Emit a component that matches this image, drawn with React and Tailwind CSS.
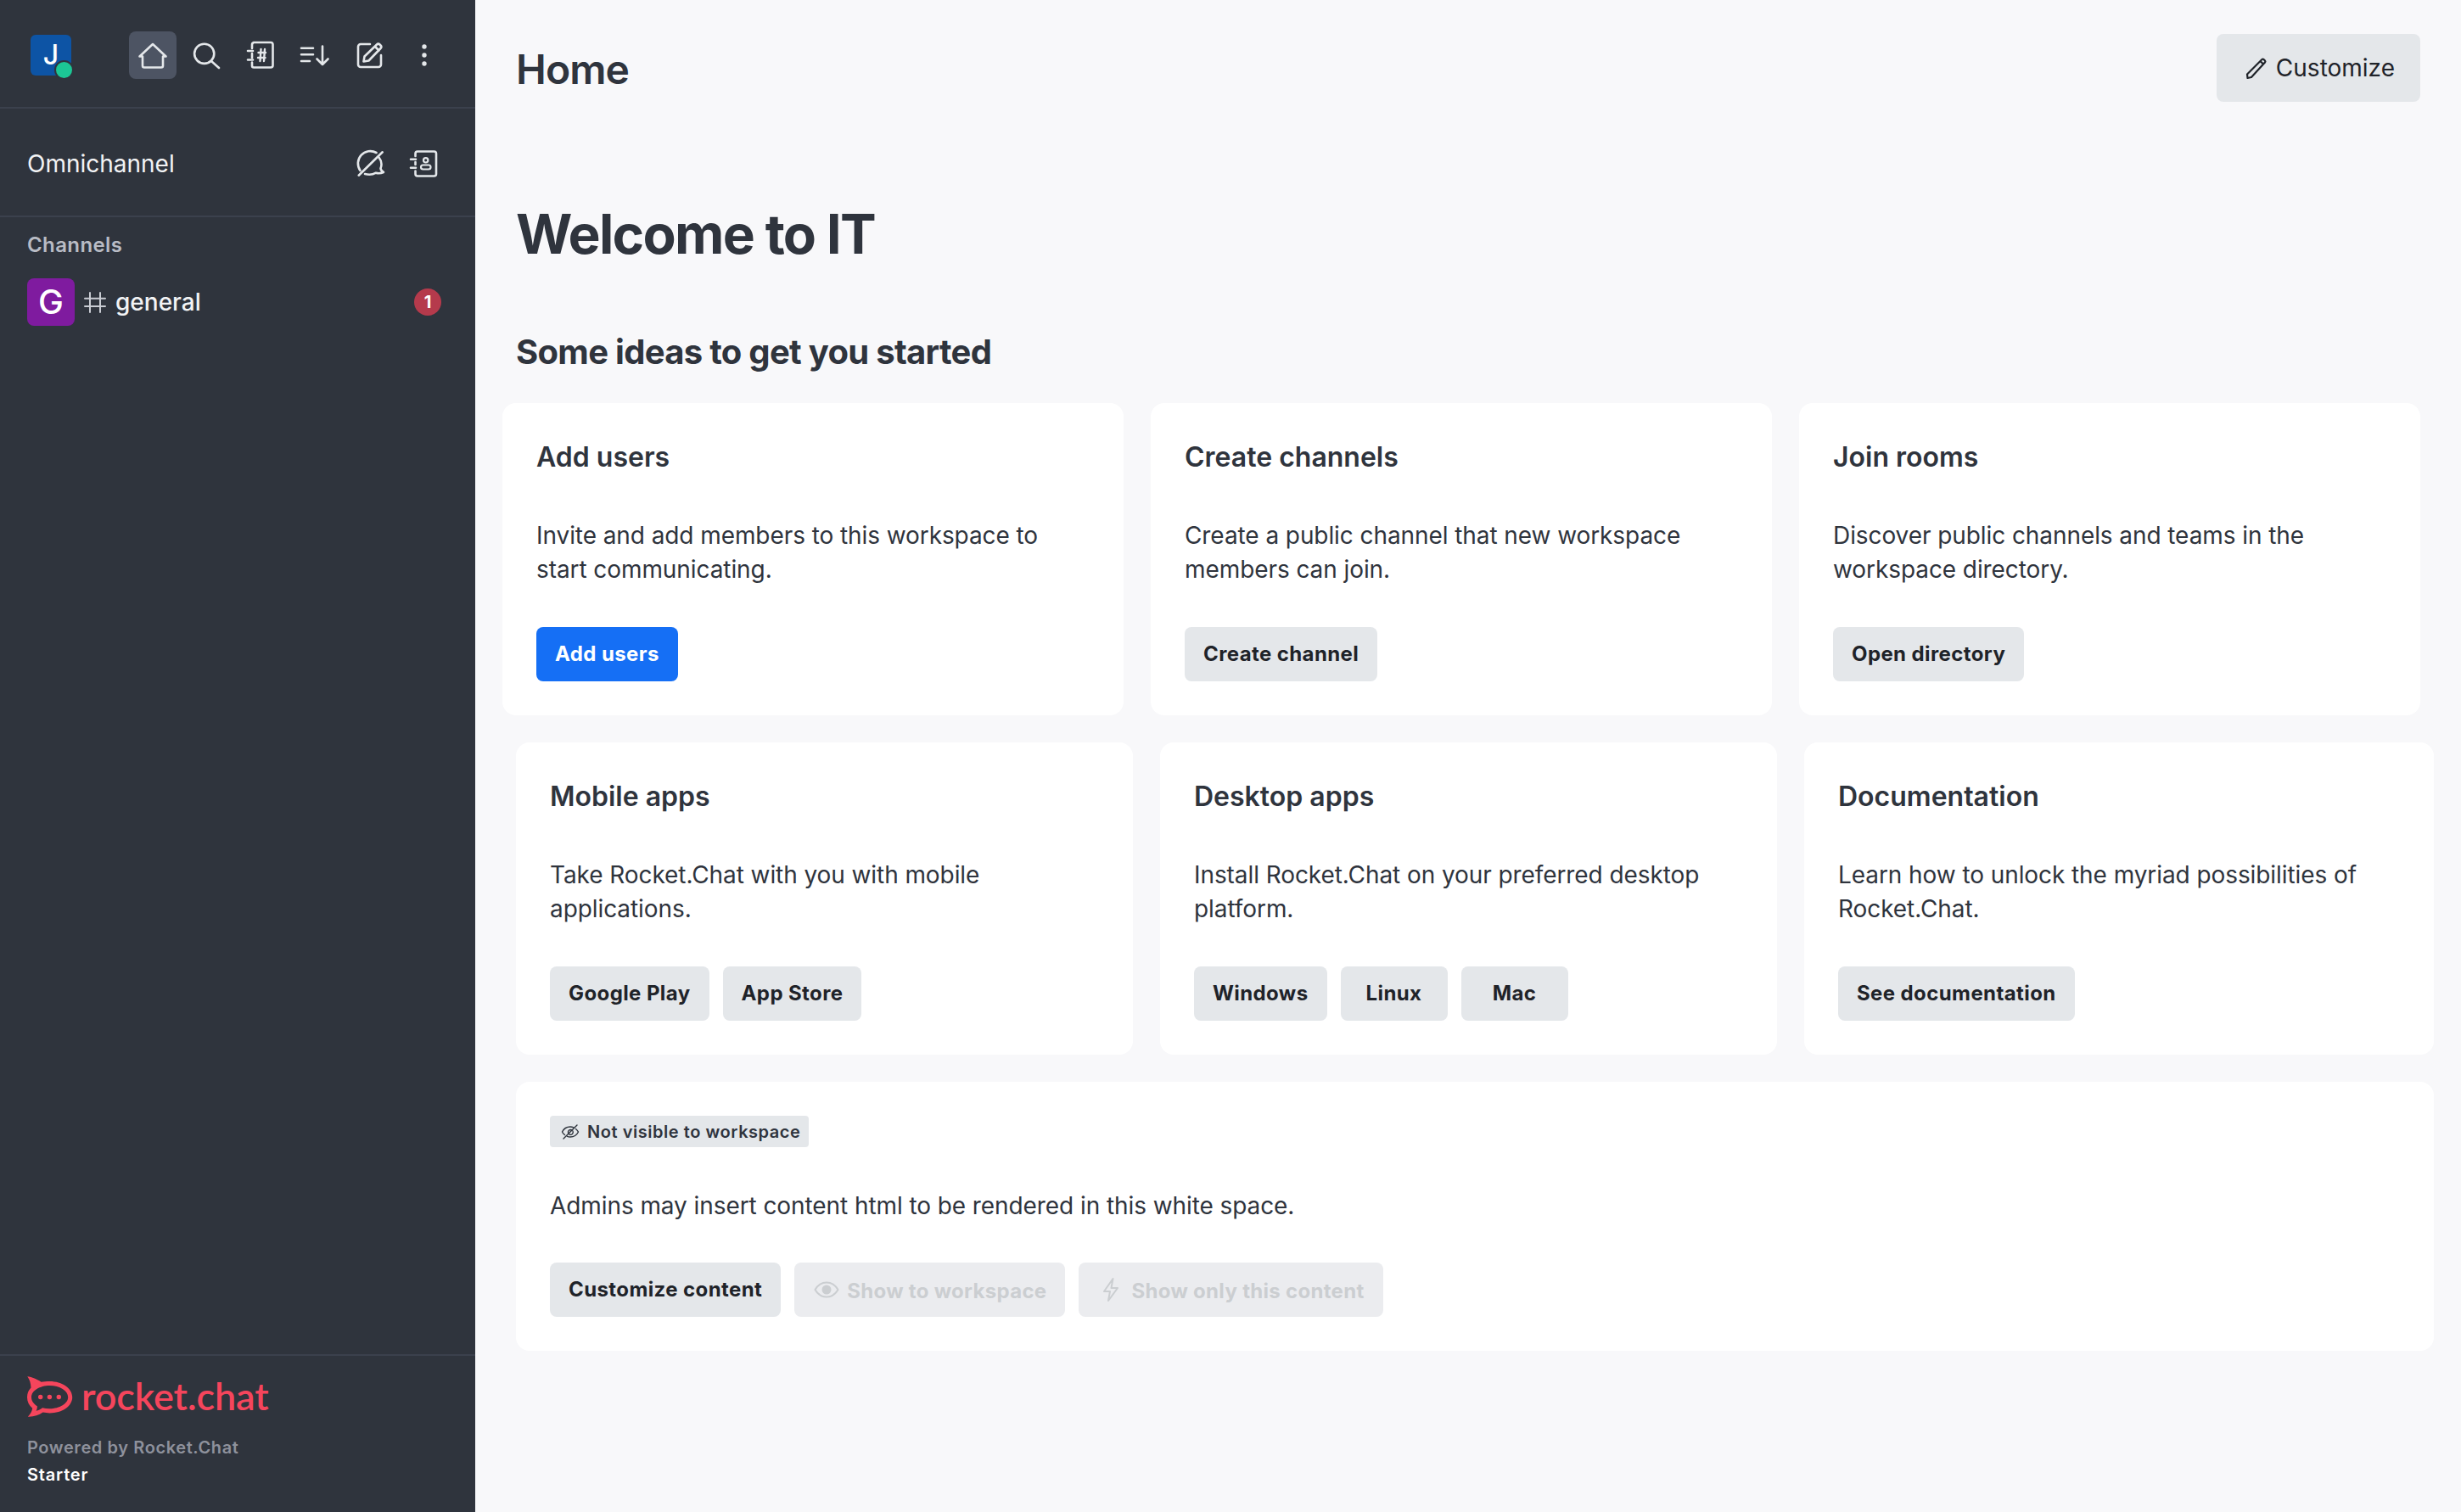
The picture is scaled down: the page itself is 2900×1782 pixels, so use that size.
const Ico = ({ children, className = "w-10 h-10", sw = 2.6 }) => (
  <svg viewBox="0 0 40 40" fill="none" stroke="currentColor" strokeWidth={sw} strokeLinecap="round" strokeLinejoin="round" className={className}>
    {children}
  </svg>
);

const Home = () => (
  <Ico><path d="M4.5 21.5 20 7l15.5 14.5H32v11a2 2 0 0 1-2 2H10a2 2 0 0 1-2-2v-11H4.5Z" /></Ico>
);
const Search = () => (
  <Ico><circle cx="16.7" cy="18.3" r="11.6" /><path d="M25 27l9 8" /></Ico>
);
const Directory = () => (
  <Ico>
    <path d="M9 12V8a3 3 0 0 1 2-3h20a2.5 2.5 0 0 1 2.5 2.5v24.500a2.500 2.500 0 0 1-2.500 2.500H11a2 2 0 0 1-2-2v-4M9 18v5" />
    <path d="M4 15h6M4 25.500h6" />
    <path d="M16.500 17h8.500M16 23h8.500M19.500 13l-1 14M24 13l-1 14" strokeWidth="2.4" />
  </Ico>
);
const Sort = () => (
  <Ico>
    <path d="M3 11.700h14M3 19.300h14M3 27h10M28 9.500V31M21.500 24.500 28 31l6.500-6.500" />
  </Ico>
);
const Edit = () => (
  <Ico>
    <path d="M20 7H9a3 3 0 0 0-3 3v21a3 3 0 0 0 3 3h21a3 3 0 0 0 3-3V20" />
    <path d="M12.500 27.500l1-6L28 7.500a2.500 2.500 0 0 1 3.500 0l1 1a2.500 2.500 0 0 1 0 3.500L18.500 26.500l-6 1ZM26 10l4.500 4.500" />
  </Ico>
);
const Kebab = () => (
  <svg viewBox="0 0 40 40" fill="currentColor" className="w-10 h-10">
    <circle cx="20" cy="10" r="2.700" /><circle cx="20" cy="20" r="2.700" /><circle cx="20" cy="30" r="2.700" />
  </svg>
);
const OmniOff = () => (
  <Ico>
    <path d="M27.500 7A14.500 14.500 0 0 0 8.500 28" />
    <path d="M30.500 12.500C32.500 15 33.500 17.500 33.500 20.500c0 2-.4 3.600-1 5 .3 1.800 1.500 3.500 3.500 4.500-3 1.300-6.500 1.500-9 .7-4 2.300-8.500 2.500-13 1.300" />
    <path d="M34.700 6.300 6.700 33.700" />
  </Ico>
);
const Contact = () => (
  <Ico>
    <path d="M9.500 11V8a2.500 2.500 0 0 1 2.500-2.500h19.500A2.500 2.500 0 0 1 34 8v24a2.500 2.500 0 0 1-2.500 2.500H12A2.500 2.500 0 0 1 9.500 32v-3.500M9.500 18v3" />
    <path d="M4 14.700h6M4 24.700h6" />
    <circle cx="21.700" cy="15.800" r="2.700" strokeWidth="2.200" />
    <rect x="16" y="21.500" width="11.500" height="5" rx="2.500" strokeWidth="2.200" />
  </Ico>
);
const HashIc = () => (
  <Ico sw={2} className="w-10 h-10 shrink-0 ml-[4px] text-[#c9ccd3]">
    <path d="M14 9v23M26 9v23M8 15.700h24M8 25h24" />
  </Ico>
);

const Logo = () => (
  <div className="flex items-center h-12">
    <svg viewBox="0 0 54 48" className="w-[54px] h-12 shrink-0">
      <path fill="#f5455c" fillRule="evenodd" d="M.3.300C5.500.800 12 3.500 16.500 6.800 19.500 6.300 23 6 26.500 6 41.500 6 53.200 14.300 53.200 24.700c0 10.400-11.700 18.700-26.700 18.700-2.500 0-5.500-.3-8-.8C13.500 46.200 7.500 48 .8 47.700 4 44.500 5.800 41.300 6.200 37.800 2.200 34.300 0 29.800 0 24.700c0-4.500 1.500-8 4.500-11.200C4.300 8.500 3 4 .3.300ZM26.500 11C15 11 5 17 5 24.700c0 4.200 2.500 7.800 6.800 10.500.2 1.800-.2 3.700-1.300 5.600 2.800-.5 5.300-1.800 7.500-3.600 2.600.6 5.500 1 8.500 1 11.800 0 21.700-6.300 21.700-13.500C48.200 17 38.300 11 26.500 11Z" />
      <circle cx="15.700" cy="24.500" r="2.700" fill="#f5455c" />
      <circle cx="26.400" cy="24.500" r="2.700" fill="#f5455c" />
      <circle cx="37.300" cy="24.500" r="2.700" fill="#f5455c" />
    </svg>
    <span className="ml-[10px] -mt-[2px] font-['Lato',sans-serif] font-semibold text-[45px] leading-[48px] tracking-[-0.1px] text-[#f5455c]">rocket.chat</span>
  </div>
);

const Btn = ({ children, primary }) => (
  <button className={`flex items-center justify-center min-w-[126px] h-16 px-[22px] rounded-lg text-[24px] leading-10 font-bold tracking-[0.4px] ${primary ? "bg-[#156ff5] text-white" : "bg-[#e4e7ea] text-[#1f2329]"}`}>
    {children}
  </button>
);
const DisabledBtn = ({ icon, children }) => (
  <button className="flex items-center h-16 px-[22px] gap-2 rounded-lg text-[24px] leading-10 font-bold tracking-[0.3px] bg-[#ebecef] text-[#cbced1]">
    {icon}
    <span className="mt-[3px]">{children}</span>
  </button>
);

const Card = ({ title, text, buttons, primary }) => (
  <div className="bg-white rounded-2xl p-10">
    <h3 className="text-[32px] leading-12 font-semibold text-[#2f343d]">{title}</h3>
    <p className="mt-12 h-20 text-[28px] leading-10 tracking-[-0.08px] text-[#2f343d]">{text}</p>
    <div className="mt-12 flex gap-4">
      {buttons.map((b) => (
        <Btn key={b} primary={primary}>{b}</Btn>
      ))}
    </div>
  </div>
);

export default function App() {
  return (
    <div className="flex w-[2900px] h-[1782px] overflow-hidden font-['Inter',sans-serif] bg-[#f8f8fa]">
      <aside className="flex flex-col w-[560px] shrink-0 bg-[#2f343d] text-[#e4e7ea]">
        <div className="flex items-center justify-between h-32 shrink-0 pt-1 pl-9 pr-8 border-b-2 border-[#3b414d]">
          <div className="relative w-12 h-12 rounded-md bg-[#0d54a5] flex items-center justify-center text-white text-[32px] font-medium">
            J
            <span className="absolute -right-[3px] -bottom-[5px] w-[23px] h-[23px] rounded-full bg-[#1cc795] border-2 border-[#2f343d]" />
          </div>
          <nav className="flex gap-2">
            <button className="w-14 h-14 flex items-center justify-center rounded-lg bg-[#4d5463]"><Home /></button>
            <button className="w-14 h-14 flex items-center justify-center rounded-lg"><Search /></button>
            <button className="w-14 h-14 flex items-center justify-center rounded-lg"><Directory /></button>
            <button className="w-14 h-14 flex items-center justify-center rounded-lg"><Sort /></button>
            <button className="w-14 h-14 flex items-center justify-center rounded-lg"><Edit /></button>
            <button className="w-14 h-14 flex items-center justify-center rounded-lg"><Kebab /></button>
          </nav>
        </div>
        <div className="flex items-center justify-between h-32 shrink-0 pt-1 pl-8 pr-8 border-b-2 border-[#3b414d]">
          <span className="text-[28px] leading-10 text-[#f2f3f5]">Omnichannel</span>
          <div className="flex gap-2">
            <button className="w-14 h-14 flex items-center justify-center"><OmniOff /></button>
            <button className="w-14 h-14 flex items-center justify-center"><Contact /></button>
          </div>
        </div>
        <div className="pt-[17px]">
          <div className="pl-8 text-[24px] leading-8 font-semibold tracking-[0.4px] text-[#b9bcc5]">Channels</div>
          <div className="mt-[23px] flex items-center h-14 pl-8 pr-10">
            <div className="w-14 h-14 rounded-lg bg-[#7f1b9f] flex items-center justify-center text-white text-[40px] font-medium">G</div>
            <HashIc />
            <span className="ml-[4px] text-[28px] leading-10 font-medium text-[#f2f3f5]">general</span>
            <span className="ml-auto w-8 h-8 rounded-full bg-[#b53a4c] flex items-center justify-center text-white text-[20px] leading-6 font-bold">1</span>
          </div>
        </div>
        <div className="mt-auto h-[186px] shrink-0 border-t-2 border-[#3b414d] pt-6 pl-8">
          <Logo />
          <div className="mt-5 text-[20px] leading-8 font-semibold tracking-[0.6px] text-[#8e919c]">Powered by Rocket.Chat</div>
          <div className="text-[20px] leading-8 font-semibold tracking-[0.8px] text-white">Starter</div>
        </div>
      </aside>

      <main className="flex-1 flex flex-col min-w-0">
        <header className="flex items-center justify-between h-40 shrink-0 pl-12 pr-12">
          <h1 className="mt-[3px] text-[48px] leading-16 font-semibold tracking-[-0.9px] text-[#2f343d]">Home</h1>
          <button className="flex items-center gap-2 h-20 pl-[30px] pr-[30px] rounded-lg bg-[#e4e7ea] text-[28px] leading-10 text-[#1f2329]">
            <svg viewBox="0 0 32 32" fill="none" stroke="currentColor" strokeWidth="2.200" strokeLinejoin="round" className="w-8 h-8">
              <path d="M6.500 28l-.5-4.500L22 7.500l1.500-1.500a1.500 1.500 0 0 1 2 0l1.500 1.500a1.500 1.500 0 0 1 0 2L11 27l-4.500 1ZM21.500 8l3.500 3.500" />
            </svg>
            Customize
          </button>
        </header>
        <div className="flex flex-col pl-12 pr-8">
          <h2 className="mt-[76px] text-[64px] leading-20 font-bold tracking-[-1.7px] text-[#2f343d]">Welcome to IT</h2>
          <h3 className="mt-[71px] text-[40px] leading-14 font-bold tracking-[-0.7px] text-[#2f343d]">Some ideas to get you started</h3>
          <div className="mt-[32px] -ml-4 mr-4 grid grid-cols-3 gap-8">
            <Card title="Add users" primary text="Invite and add members to this workspace to start communicating." buttons={["Add users"]} />
            <Card title="Create channels" text="Create a public channel that new workspace members can join." buttons={["Create channel"]} />
            <Card title="Join rooms" text="Discover public channels and teams in the workspace directory." buttons={["Open directory"]} />
          </div>
          <div className="mt-8 grid grid-cols-[727px_727px_1fr] gap-8">
            <Card title="Mobile apps" text="Take Rocket.Chat with you with mobile applications." buttons={["Google Play", "App Store"]} />
            <Card title="Desktop apps" text="Install Rocket.Chat on your preferred desktop platform." buttons={["Windows", "Linux", "Mac"]} />
            <Card title="Documentation" text="Learn how to unlock the myriad possibilities of Rocket.Chat." buttons={["See documentation"]} />
          </div>
          <div className="mt-8 bg-white rounded-2xl p-10">
            <div className="inline-flex items-center h-[37px] pl-3 pr-[10px] gap-2 rounded bg-[#e4e7ea] text-[20px] leading-6 font-semibold tracking-[0.55px] text-[#2f343d]">
              <svg viewBox="0 0 24 24" fill="none" stroke="currentColor" strokeWidth="1.400" strokeLinecap="round" strokeLinejoin="round" className="w-6 h-6">
                <path d="M5.500 15.500C4 14.300 3 13 2.500 12c1.500-3 5-6 9.500-6 1.500 0 2.800.3 4 .8M18.500 8.500c1.300 1 2.300 2.300 3 3.500-1.500 3-5 6-9.500 6-1.300 0-2.500-.2-3.500-.6M20 4 4 20M9.500 13A3 3 0 0 1 13 9.500M15 11a3 3 0 0 1-4 4" />
              </svg>
              Not visible to workspace
            </div>
            <p className="mt-[49px] text-[28px] leading-10 tracking-[-0.08px] text-[#2f343d]">Admins may insert content html to be rendered in this white space.</p>
            <div className="mt-[47px] flex gap-4">
              <Btn>Customize content</Btn>
              <DisabledBtn icon={
                <svg viewBox="0 0 32 32" fill="none" stroke="currentColor" strokeWidth="2" strokeLinejoin="round" className="w-8 h-8">
                  <path d="M2.500 16C6 10 10.500 7.500 16 7.500S26 10 29.500 16C26 22 21.500 24.500 16 24.500S6 22 2.500 16Z" />
                  <circle cx="16" cy="16" r="4.500" fill="currentColor" />
                </svg>
              }>Show to workspace</DisabledBtn>
              <DisabledBtn icon={
                <svg viewBox="0 0 32 32" fill="none" stroke="currentColor" strokeWidth="2" strokeLinejoin="round" className="w-8 h-8">
                  <path d="M18.500 3 8 18h7l-2 11 11-15h-7.500L18.500 3Z" />
                </svg>
              }>Show only this content</DisabledBtn>
            </div>
          </div>
        </div>
      </main>
    </div>
  );
}
